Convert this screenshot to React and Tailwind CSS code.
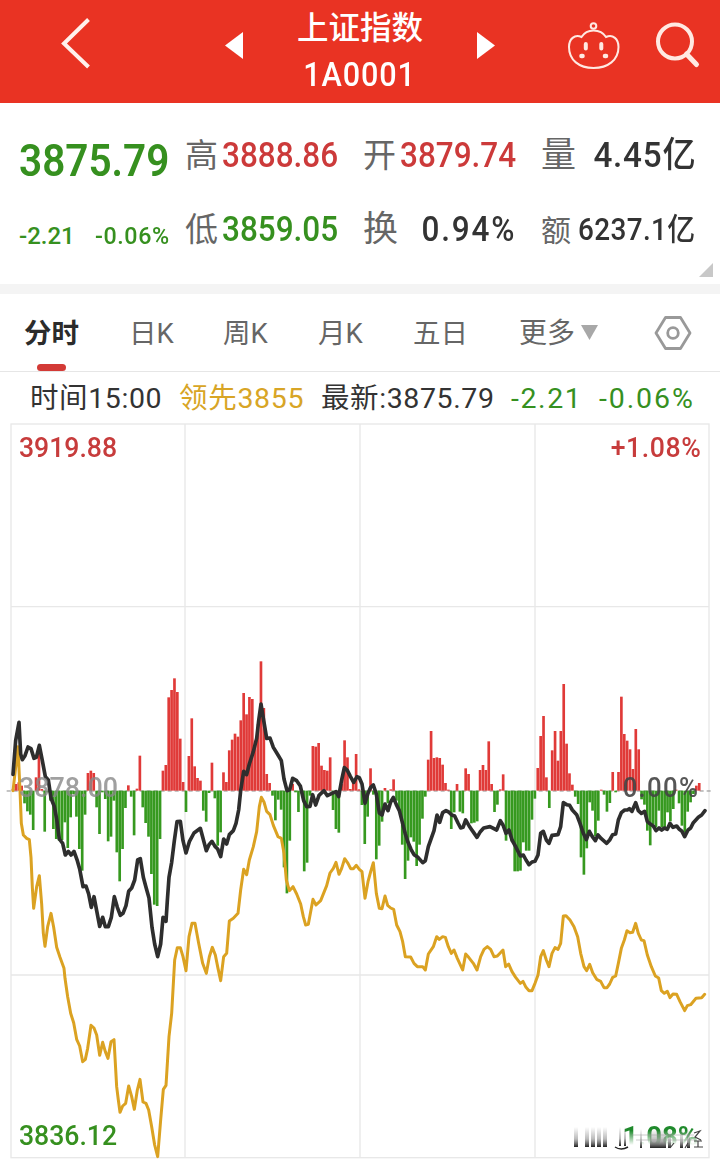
import React from 'react';

const STEP = 8.65;

// one bar per minute, height relative to the previous close line
const momentum = [
  5, 20, 25, 15, -38, -62, -72, -118, 40, 110, 5, -123, -5, -30, -115, -145, -150, -148, -95, -172,
  -80, -10, -78, -175, -240, -72, 53, 60, 53, -50, -130, -5, -25, -152, -138, -30, -185, -272, -175, -52,
  16, -18, -134, 6, 105, -50, -97, -138, -250, -342, -346, -145, 60, 77, 280, 302, 337, 296, 156, 26,
  -64, 104, 217, 73, 38, 30, -60, -93, -7, 84, -23, -165, -125, 55, 26, 121, 153, 171, 162, 211,
  293, 229, 281, 275, 150, 200, 388, 248, 50, 23, -15, -89, -27, -57, -230, -308, -150, 20, -5, -64,
  -8, -242, -216, -15, 134, 132, 143, 75, 62, 60, 100, -58, -115, -126, 20, 151, 100, 5, 35, 110,
  4, -43, -160, -78, 67, -12, -206, -165, -93, 8, -38, 4, 34, -30, -60, -162, -265, -210, -140, -153,
  -226, -162, -84, -18, 93, 179, 98, 100, 98, 78, 23, 3, -115, -65, 20, -63, -68, 67, 50, -98,
  -96, -92, 62, 77, 62, 148, 20, -64, -42, 4, 49, -150, -120, -152, -242, -242, -240, -155, -180, -180,
  -87, -24, 68, 164, 224, 40, -52, 121, 179, 90, 179, 320, 141, 52, 18, -18, -40, -200, -252, -173,
  -35, -60, -137, -90, 3, -12, -63, -37, 56, -5, 56, 282, 170, 150, 124, 65, 185, 124, -26, -42,
  -120, -164, -100, -110, -60, -110, -110, -65, -92, -55, 3, -38, -105, -125, -63, -35, -10, 15, 23,
];

const pricePoints = `39,-49 47,-150 57,-205 62,-110 67,-93 75,-105 84,-131 93,-126 102,-97 109,-100 118,-136 127,-90 136,-42
145,-32 153,22 163,48 170,85 178,145 188,158 196,193 205,182 213,193 222,182 232,210 239,235 249,288 258,286 266,310
274,350 282,318 290,360 299,407 308,380 316,408 325,408 334,380 343,318 352,350 361,374 369,368 378,345 386,302 395,292
404,268 413,208 421,204 430,260 438,290 447,322 456,410 464,460 473,498 482,460 489,380 498,392 502,330 507,260 515,215
523,150 531,93 541,92 549,150 558,187 568,153 582,127 601,113 611,150 619,180 627,162 636,152 645,167 653,175 662,198
671,145 680,160 688,132 700,120 708,98 716,58 722,0 731,-58 740,-48 748,-80 760,-117 770,-157 776,-210 783,-260 792,-205
800,-157 810,-158 820,-130 834,-107 844,-90 852,-35 861,0 869,-3 878,-37 890,-30 901,-14 911,30 920,48 930,47 938,12
947,43 957,14 972,0 982,15 996,8 1008,3 1016,18 1025,-32 1033,-69 1042,-61 1051,-43 1061,-25 1071,-42 1078,-39 1086,-20
1095,38 1104,8 1112,-10 1120,-17 1129,10 1138,67 1146,73 1155,40 1164,60 1172,34 1180,20 1189,42 1198,60 1207,95 1216,130
1224,155 1233,176 1242,192 1254,200 1268,216 1276,210 1285,168 1302,120 1311,73 1319,95 1328,66 1338,60 1346,64 1355,73
1364,76 1374,97 1382,112 1389,110 1397,88 1407,105 1417,120 1431,140 1441,123 1451,112 1470,108 1490,118 1501,90 1509,103
1518,128 1527,118 1536,148 1547,168 1561,196 1570,193 1578,208 1587,222 1596,214 1605,212 1614,193 1622,128 1630,122
1639,148 1647,158 1656,134 1674,132 1682,108 1690,36 1700,42 1709,44 1717,58 1730,72 1740,98 1750,128 1759,147 1768,122
1777,138 1786,150 1794,133 1804,144 1820,158 1829,148 1838,132 1847,130 1855,88 1864,66 1874,58 1882,58 1888,54 1896,62
1907,36 1915,60 1924,68 1934,62 1942,93 1951,100 1960,106 1968,120 1977,112 1985,118 1993,112 2002,116 2010,98 2019,110
2030,106 2038,116 2046,122 2054,138 2064,118 2072,112 2080,96 2095,80 2105,73 2115,60`;

const leadPoints = `39,0 47,-70 54,-132 60,0 64,98 70,133 80,143 88,147 93,200 97,290 101,353 110,288 118,255 125,340 130,428
135,467 143,408 153,368 161,410 170,470 180,500 192,533 195,563 203,618 212,668 221,696 230,746 239,766 248,813 256,806
263,773 273,704 282,712 290,733 299,794 308,755 316,783 324,803 333,753 342,747 350,888 355,928 360,965 368,946 377,938
386,886 395,918 403,956 412,898 420,866 429,934 438,938 446,958 455,1008 464,1063 473,1098 482,988 490,896 498,884
507,738 515,668 524,508 532,471 541,471 549,498 558,540 567,438 576,398 585,398 596,458 608,518 619,548 628,498 637,470
646,493 654,533 662,570 671,498 680,488 688,391 700,383 714,368 722,298 731,236 740,252 748,208 760,168 770,123 778,48
784,20 792,34 800,62 810,72 820,104 834,138 844,143 852,188 859,268 868,300 879,288 890,310 902,340 910,378 917,403
925,401 939,326 948,343 962,330 980,285 990,247 1000,233 1008,215 1017,251 1025,233 1034,204 1044,218 1052,234 1060,234
1069,224 1078,236 1086,243 1095,323 1104,273 1112,243 1120,216 1129,308 1138,353 1146,354 1155,316 1163,344 1172,352
1181,356 1190,403 1200,423 1208,453 1216,498 1232,499 1242,518 1252,528 1268,528 1276,538 1285,490 1300,468 1310,438
1318,446 1328,438 1336,440 1345,468 1354,488 1362,478 1372,503 1388,538 1397,490 1406,500 1420,518 1431,538 1442,498
1452,476 1462,468 1472,476 1482,498 1492,496 1509,478 1517,528 1526,520 1536,543 1547,560 1561,578 1569,572 1578,590
1587,600 1596,600 1605,578 1614,553 1622,498 1630,480 1639,508 1647,528 1656,488 1665,471 1674,476 1682,458 1690,376
1698,375 1710,388 1722,408 1733,438 1742,488 1752,528 1760,540 1769,521 1778,546 1790,566 1802,572 1812,591 1821,591
1829,580 1838,560 1847,556 1855,518 1864,473 1873,448 1881,420 1890,426 1898,425 1907,398 1915,428 1924,448 1932,450
1942,493 1954,528 1966,556 1976,562 1984,600 1993,608 2002,602 2010,621 2019,610 2030,611 2040,633 2054,660 2062,645
2072,642 2088,623 2105,621 2114,611`;

function Header() {
  return (
    <header className="flex h-[103px] items-start bg-[#e93323] text-white">
      <svg className="ml-[60px] mt-[17px] h-[52px] w-8" viewBox="0 0 32 52" fill="none" stroke="#fff1ec" strokeWidth="4">
        <path d="M28.5 2.5 4 26.5 28.5 50" />
      </svg>
      <svg className="ml-[133px] mt-8 h-7 w-[18px]" viewBox="0 0 18 28" fill="currentColor">
        <path d="M0 13.5 18 0V27Z" />
      </svg>
      <div className="ml-[54px] flex w-[126px] flex-col items-center pt-[11px]">
        <h1 className="whitespace-nowrap text-[31.5px] font-medium leading-[36px]">上证指数</h1>
        <p className="mt-[8px] origin-center scale-x-[0.9] whitespace-nowrap text-[34px] font-medium leading-[38px] tracking-[1px]">
          1A0001
        </p>
      </div>
      <svg className="ml-[54px] mt-8 h-7 w-[18px]" viewBox="0 0 18 28" fill="currentColor">
        <path d="M18 13.5 0 0V27Z" />
      </svg>
      <svg className="ml-[72px] mt-5 h-[51px] w-[54px]" viewBox="0 0 54 51" fill="none" stroke="#ffe9e2" strokeWidth="2">
        <circle cx="26.500" cy="6" r="2.800" />
        <path d="M14.500 17C17 13 21 10.500 26.500 10.500S36.500 13 39 17C46 14 51.500 19 51.500 27 51.500 40 41 48 26.500 48S2 40 2 27C2 19 7.500 14 14.500 17Z" />
        <path d="M18.800 24v4.500M34.300 24v4.500" strokeWidth="4" strokeLinecap="round" />
        <path d="M14.500 36h1M38 36h1" strokeWidth="4.600" strokeLinecap="round" />
      </svg>
      <svg className="ml-[34px] mt-[21px] h-[48px] w-[48px]" viewBox="0 0 48 48" fill="none" stroke="#ffe9e2" strokeWidth="4">
        <circle cx="20" cy="20.500" r="17" />
        <path d="m31.500 33 10 10.500" strokeWidth="5" strokeLinecap="round" />
      </svg>
    </header>
  );
}

function Quote() {
  return (
    <section className="relative flex h-[181px] whitespace-nowrap text-[#333]">
      <div className="w-[166px] pl-[19px] pt-[31px] text-[#36901f]">
        <p className="w-[150px] origin-left scale-x-[0.9] text-[45px] font-semibold leading-[54px]">3875.79</p>
        <div className="mt-[33px] flex h-[30px] justify-between text-[24px] leading-[30px]">
          <span className="w-[60px] font-medium">-2.21</span>
          <span className="w-[71px] origin-left scale-x-[0.97] font-medium tracking-[0.6px]">-0.06%</span>
        </div>
      </div>

      <div className="w-[178px] pl-[19px] pt-[31px]">
        <div className="flex h-[44px] items-center">
          <span className="w-[37px] shrink-0 text-[33px] text-[#666]">高</span>
          <span className="origin-left scale-x-[0.9] text-[35px] font-medium text-[#cc3a3a]">3888.86</span>
        </div>
        <div className="mt-[30px] flex h-[44px] items-center">
          <span className="w-[37px] shrink-0 text-[33px] text-[#666]">低</span>
          <span className="origin-left scale-x-[0.9] text-[35px] font-medium text-[#36901f]">3859.05</span>
        </div>
      </div>

      <div className="w-[172px] pl-[19px] pt-[31px]">
        <div className="flex h-[44px] items-center">
          <span className="w-[37px] shrink-0 text-[33px] text-[#666]">开</span>
          <span className="origin-left scale-x-[0.9] text-[35px] font-medium text-[#cc3a3a]">3879.74</span>
        </div>
        <div className="mt-[30px] flex h-[44px] items-center justify-between">
          <span className="text-[35px] text-[#666]">换</span>
          <span className="origin-right scale-x-[0.9] text-[35px] font-medium tracking-[2px]">0.94%</span>
        </div>
      </div>

      <div className="w-[180px] pl-[25px] pt-[31px]">
        <div className="flex h-[44px] items-center justify-between">
          <span className="text-[35px] text-[#666]">量</span>
          <span className="origin-right scale-x-[0.95] text-[35px] font-medium tracking-[0.8px]">4.45亿</span>
        </div>
        <div className="mt-[30px] flex h-[44px] items-center justify-between">
          <span className="w-[30px] text-[30px] text-[#666]">额</span>
          <span className="-ml-5 origin-right scale-x-[0.9] text-[31px] font-medium tracking-[0.4px]">6237.1亿</span>
        </div>
      </div>
      <svg className="absolute bottom-[7px] right-[7px] size-3.5" viewBox="0 0 14 14" fill="#c8c8c8">
        <path d="M14 0v14H0Z" />
      </svg>
    </section>
  );
}

function Tabs() {
  return (
    <nav className="flex h-[78px] whitespace-nowrap border-b border-[#e6e6e6] text-[27.5px] leading-[80px] text-[#666]">
      <div className="relative ml-[24px] w-[105px] font-bold text-[#2b2b2b]">
        分时
        <span className="absolute bottom-0 left-[13px] h-[7px] w-[29px] rounded-full bg-[#d33a36]" />
      </div>
      <span className="w-[94px]">日K</span>
      <span className="w-[95px]">周K</span>
      <span className="w-[95px]">月K</span>
      <span className="w-[106px]">五日</span>
      <span className="w-[62px] text-[28px]">更多</span>
      <svg className="mt-[31px] h-[15px] w-[17px]" viewBox="0 0 17 15" fill="#a8a8a8">
        <path d="M0 0h17L8.500 15Z" />
      </svg>
      <svg className="ml-[56px] mt-[20px] h-[38px] w-[38px]" viewBox="0 0 38 38" fill="none" stroke="#999" strokeWidth="2.800">
        <path d="M11.500 3.500h15L36 19l-9.500 15.500h-15L2 19Z" strokeLinejoin="round" />
        <circle cx="19" cy="19" r="5.300" />
      </svg>
    </nav>
  );
}

function Chart() {
  return (
    <div className="relative h-[743px] text-[28px] font-medium leading-8">
      <svg className="block h-[743px] w-full" viewBox="0 -1103 2160 2229" fill="none">
        <g stroke="#e8e8e8" strokeWidth="4">
          <rect x="33" y="-1100" width="2094" height="2201" />
          <path d="M555-1100V1101M1080-1100V1101M1605-1100V1101M33-552H2127M33 553H2127" />
        </g>
        <path d="M20 1H2140" stroke="#888" strokeWidth="3" strokeDasharray="12 9" />
        {momentum.map((v, i) => (
          <rect
            key={i}
            x={39 + i * STEP - 4}
            y={v > 0 ? -v : 0}
            width="8"
            height={Math.abs(v)}
            fill={v > 0 ? '#e03a38' : '#36991f'}
          />
        ))}
        <polyline points={leadPoints} stroke="#dba222" strokeWidth="9" strokeLinejoin="round" strokeLinecap="round" />
        <polyline points={pricePoints} stroke="#2e2e2e" strokeWidth="11" strokeLinejoin="round" strokeLinecap="round" />
      </svg>

      <span className="absolute left-[19px] top-[9px] origin-left scale-x-[0.95] text-[#c73c3c]">3919.88</span>
      <span className="absolute right-[19px] top-[9px] origin-right scale-x-[0.95] tracking-[0.6px] text-[#c73c3c]">+1.08%</span>
      <span className="absolute left-[19px] top-[349px] origin-left scale-x-[0.96] text-[#888]/80">3878.00</span>
      <span className="absolute right-[21px] top-[349px] origin-right scale-x-[0.92] tracking-[1.4px] text-[#444]/90">0.00%</span>
      <span className="absolute left-[19px] top-[697px] origin-left scale-x-[0.95] text-[#36901f]">3836.12</span>

      {/* washed out corner label */}
      <span className="absolute right-[22px] top-[698px] origin-right scale-x-[0.98] bg-gradient-to-b from-[#1f8a2c] from-30% to-transparent to-75% bg-clip-text font-bold text-transparent">
        1.08%
      </span>
      <svg className="absolute right-[14px] top-[703px] h-6 w-[136px]" viewBox="0 0 136 24" fill="none">
        <defs>
          <linearGradient id="fade" x1="0" y1="0" x2="0" y2="1">
            <stop offset="0" stopColor="#555" stopOpacity="0" />
            <stop offset="0.600" stopColor="#555" stopOpacity="0.400" />
            <stop offset="1" stopColor="#222" />
          </linearGradient>
        </defs>
        <g fill="url(#fade)">
          <rect x="4" y="1" width="4" height="20" />
          <rect x="15" y="1" width="4" height="20" />
          <rect x="21" y="1" width="4" height="20" />
          <rect x="27" y="1" width="4" height="20" />
          <rect x="33" y="1" width="4" height="20" />
          <rect x="49" y="1" width="2" height="19" />
          <rect x="54" y="1" width="2" height="19" />
          <rect x="70" y="3" width="2" height="19" />
          <rect x="80" y="3" width="16" height="19" />
          <rect x="98" y="3" width="3" height="19" />
          <rect x="110" y="3" width="3" height="19" />
          <rect x="117" y="3" width="3" height="19" />
        </g>
        <path d="M45 21q6 4 13 0" stroke="#222" strokeWidth="1.500" />
        <path d="M62 9h62M66 14h58" stroke="#999" strokeWidth="1" opacity="0.500" />
        <path d="M104 17l-4 5M118 17l-3 5M124 7l6-2-5 6 6 3M124 15h8M128 15v6M124 21h9" stroke="#444" strokeWidth="1.200" />
      </svg>
    </div>
  );
}

function App() {
  return (
    <div className="h-[1166px] w-[720px] overflow-hidden bg-white font-[Roboto,'Noto_Sans_CJK_SC',sans-serif]">
      <Header />
      <Quote />
      <div className="h-[10px] bg-[#f4f4f4]" />
      <Tabs />
      <div className="flex h-[51px] whitespace-nowrap pl-[30px] text-[28.5px] leading-[53px] text-[#333]">
        <span className="w-[149px] tracking-[0.6px]">时间15:00</span>
        <span className="w-[142px] tracking-[0.7px] text-[#d8a526]">领先3855</span>
        <span className="w-[190px] tracking-[0.6px]">最新:3875.79</span>
        <span className="w-[88px] tracking-[1.6px] text-[#36901f]">-2.21</span>
        <span className="tracking-[1.9px] text-[#36901f]">-0.06%</span>
      </div>
      <Chart />
    </div>
  );
}

export default App;
